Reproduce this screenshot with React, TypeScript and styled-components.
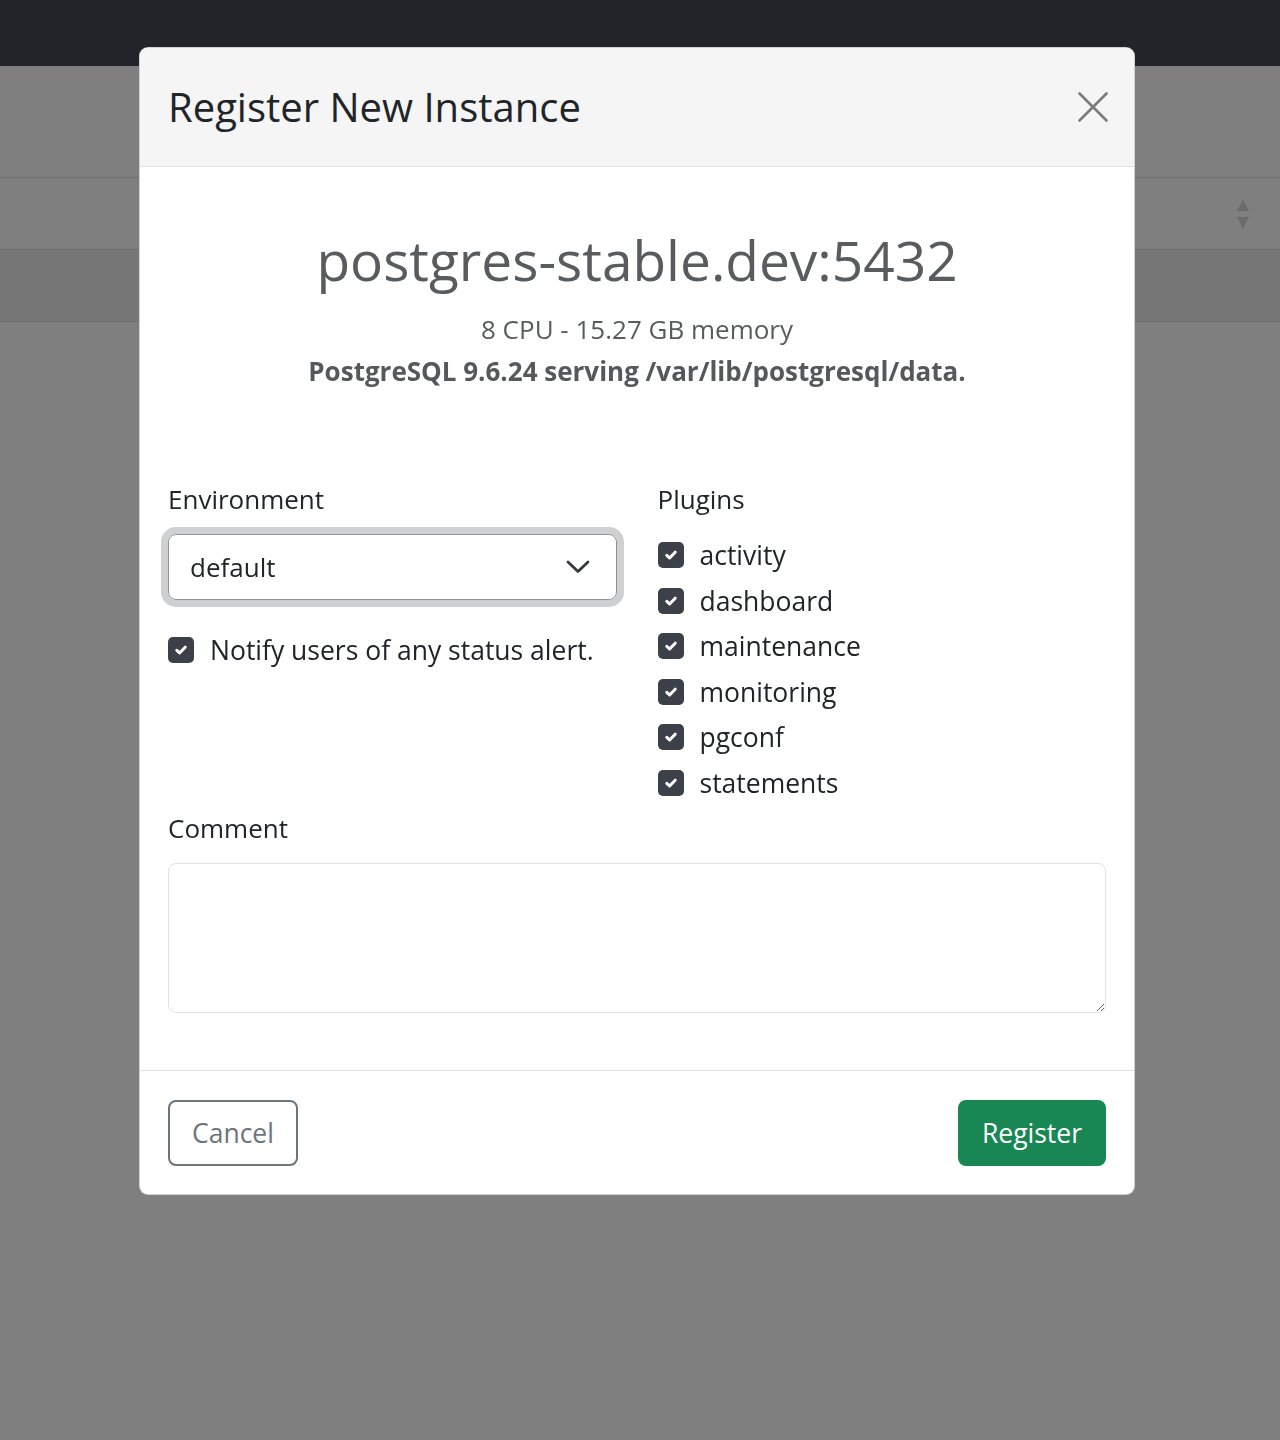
import React from "react";
import styled, { createGlobalStyle } from "styled-components";

const GlobalStyle = createGlobalStyle`
  html, body { margin: 0; padding: 0; }
  body {
    font-family: "Open Sans", "Noto Sans", sans-serif;
    color: #212529;
    background: #ffffff;
  }
  * { box-sizing: border-box; }
`;

const Page = styled.div`
  min-height: 1440px;
  background: #ffffff;
  display: flex;
  flex-direction: column;
`;

const Navbar = styled.div`
  height: 66px;
  background: #424a52;
`;

const TopSection = styled.div`
  height: 112px;
  border-bottom: 1px solid #dcdcdc;
`;

const TableRow = styled.div<{ $striped?: boolean }>`
  height: 72px;
  border-bottom: 1px solid #dcdcdc;
  background: ${(p) => (p.$striped ? "#eeeeee" : "#ffffff")};
  display: flex;
  align-items: center;
  justify-content: flex-end;
  padding-right: 30px;
`;

const Backdrop = styled.div`
  position: fixed;
  inset: 0;
  background: rgba(0, 0, 0, 0.5);
`;

const ModalWrap = styled.div`
  position: fixed;
  inset: 0;
  padding: 47px 0 0 139px;
`;

const Modal = styled.div`
  width: 996px;
  background: #ffffff;
  border: 1px solid rgba(0, 0, 0, 0.175);
  border-radius: 9px;
  overflow: hidden;
  display: flex;
  flex-direction: column;
`;

const Header = styled.div`
  background: #f5f5f5;
  border-bottom: 1px solid #dee2e6;
  padding: 28px 28px;
  display: flex;
  align-items: center;
`;

const Title = styled.h4`
  margin: 0;
  font-size: 40px;
  font-weight: 400;
  line-height: 62px;
  color: #212529;
`;

const CloseButton = styled.button`
  margin-left: auto;
  margin-right: -2px;
  border: 0;
  background: transparent;
  padding: 0;
  width: 30px;
  height: 30px;
  display: flex;
  cursor: pointer;
`;

const Body = styled.div`
  padding: 28px;
  display: flex;
  flex-direction: column;
`;

const Info = styled.div`
  text-align: center;
  color: #595c5f;
  margin-bottom: 86px;
`;

const Host = styled.h2`
  margin: 32px 0 15px;
  font-size: 55px;
  font-weight: 400;
  line-height: 66px;
`;

const InfoLine = styled.div<{ $bold?: boolean }>`
  font-size: 26px;
  line-height: 42px;
  font-weight: ${(p) => (p.$bold ? 700 : 400)};
  color: ${(p) => (p.$bold ? "#55595c" : "#595c5f")};
`;

const Columns = styled.div`
  display: grid;
  grid-template-columns: 1fr 1fr;
  column-gap: 41px;
`;

const Column = styled.div`
  display: flex;
  flex-direction: column;
`;

const Label = styled.label`
  font-size: 26px;
  line-height: 42px;
  margin-bottom: 14px;
  color: #212529;
`;

const SelectBox = styled.div`
  height: 66px;
  border: 1px solid #909498;
  border-radius: 8px;
  box-shadow: 0 0 0 7px #cfd0d2;
  display: flex;
  align-items: center;
  padding: 0 26px 0 21px;
  font-size: 26px;
  color: #212529;
  margin-bottom: 29px;
`;

const SelectValue = styled.span`
  flex: 1;
`;

const CheckRow = styled.div`
  display: flex;
  align-items: center;
  min-height: 42px;
  margin-bottom: 3.5px;
  gap: 16px;
  font-size: 26.5px;
  line-height: 42px;
  color: #212529;
`;

const CheckBox = styled.span`
  width: 26px;
  height: 26px;
  border-radius: 5px;
  background: #3b4049;
  display: flex;
  align-items: center;
  justify-content: center;
  flex-shrink: 0;
`;

const Textarea = styled.textarea`
  display: block;
  width: 100%;
  height: 150px;
  border: 1px solid #dee2e6;
  border-radius: 8px;
  margin-bottom: 29px;
  font-family: inherit;
  font-size: 26px;
  padding: 10px 20px;
  resize: vertical;
`;

const Footer = styled.div`
  border-top: 1px solid #dee2e6;
  padding: 29px 28px 28px;
  display: flex;
  justify-content: space-between;
  align-items: center;
`;

const Button = styled.button<{ $variant: "outline" | "success" }>`
  height: 66px;
  padding: 0 22px;
  border-radius: 8px;
  font-family: inherit;
  font-size: 26.5px;
  cursor: pointer;
  border: 2px solid ${(p) => (p.$variant === "outline" ? "#6c757d" : "#198754")};
  background: ${(p) => (p.$variant === "outline" ? "#ffffff" : "#198754")};
  color: ${(p) => (p.$variant === "outline" ? "#6c757d" : "#ffffff")};
`;

const Check = () => (
  <CheckBox>
    <svg width="16" height="16" viewBox="0 0 16 16">
      <path d="M3.8 8.3 L6.6 11 L12.2 5.2" fill="none" stroke="#fff" strokeWidth="3" strokeLinecap="round" strokeLinejoin="round" />
    </svg>
  </CheckBox>
);

const plugins = ["activity", "dashboard", "maintenance", "monitoring", "pgconf", "statements"];

export default function App() {
  return (
    <>
      <GlobalStyle />
      <Page>
        <Navbar />
        <TopSection />
        <TableRow>
          <svg width="14" height="32" viewBox="0 0 14 32">
            <path d="M7 1 L13 13 L1 13 Z" fill="#d6d6d6" />
            <path d="M7 31 L13 19 L1 19 Z" fill="#d6d6d6" />
          </svg>
        </TableRow>
        <TableRow $striped />
      </Page>
      <Backdrop />
      <ModalWrap>
        <Modal>
          <Header>
            <Title>Register New Instance</Title>
            <CloseButton aria-label="Close">
              <svg width="30" height="30" viewBox="0 0 30 30">
                <path d="M1.5 1.5 L28.5 28.5 M28.5 1.5 L1.5 28.5" stroke="#7b7b7b" strokeWidth="2.6" strokeLinecap="round" />
              </svg>
            </CloseButton>
          </Header>
          <Body>
            <Info>
              <Host>postgres-stable.dev:5432</Host>
              <InfoLine>8 CPU - 15.27 GB memory</InfoLine>
              <InfoLine $bold>PostgreSQL 9.6.24 serving /var/lib/postgresql/data.</InfoLine>
            </Info>
            <Columns>
              <Column>
                <Label>Environment</Label>
                <SelectBox>
                  <SelectValue>default</SelectValue>
                  <svg width="24" height="14" viewBox="0 0 24 14">
                    <path d="M2 2 L12 11.5 L22 2" fill="none" stroke="#343a40" strokeWidth="2.8" strokeLinecap="round" strokeLinejoin="round" />
                  </svg>
                </SelectBox>
                <CheckRow>
                  <Check />
                  <span>Notify users of any status alert.</span>
                </CheckRow>
              </Column>
              <Column>
                <Label>Plugins</Label>
                {plugins.map((p) => (
                  <CheckRow key={p}>
                    <Check />
                    <span>{p}</span>
                  </CheckRow>
                ))}
              </Column>
            </Columns>
            <Label>Comment</Label>
            <Textarea />
          </Body>
          <Footer>
            <Button $variant="outline">Cancel</Button>
            <Button $variant="success">Register</Button>
          </Footer>
        </Modal>
      </ModalWrap>
    </>
  );
}
